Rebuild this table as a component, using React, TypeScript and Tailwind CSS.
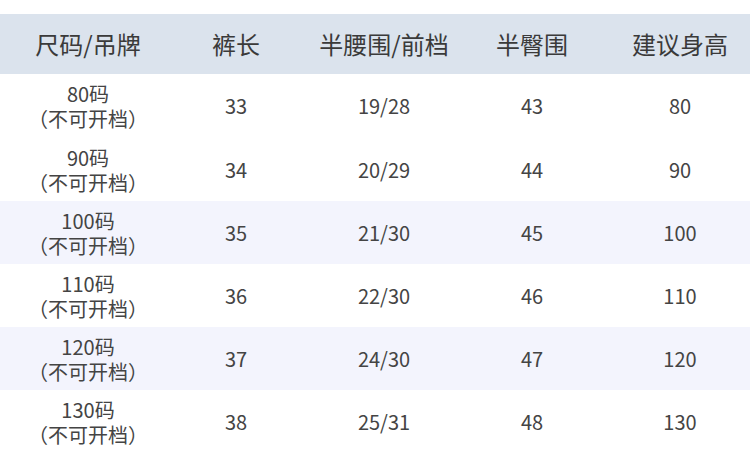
const header = ["尺码/吊牌", "裤长", "半腰围/前档", "半臀围", "建议身高"];

const rows = [
  { size: "80码", len: "33", waist: "19/28", hip: "43", height: "80" },
  { size: "90码", len: "34", waist: "20/29", hip: "44", height: "90" },
  { size: "100码", len: "35", waist: "21/30", hip: "45", height: "100" },
  { size: "110码", len: "36", waist: "22/30", hip: "46", height: "110" },
  { size: "120码", len: "37", waist: "24/30", hip: "47", height: "120" },
  { size: "130码", len: "38", waist: "25/31", hip: "48", height: "130" },
];

const font = { fontFamily: '"Noto Sans CJK SC", "Noto Sans", sans-serif' };

export default function App() {
  return (
    <div className="w-[750px] h-[452px] bg-white overflow-hidden pt-[14px]" style={font}>
      {/* header band */}
      <div className="flex h-[60px] items-center bg-[#dbe3ed] pl-[14px] text-[24px] leading-none text-[#3a3a3a]">
        {header.map((h) => (
          <div key={h} className="w-[148px] shrink-0 text-center">{h}</div>
        ))}
      </div>

      {rows.map((r, i) => (
        <div
          key={r.size}
          className={`flex items-center pl-[14px] text-[20px] leading-none text-[#444] ${i === 0 ? "h-[64px]" : "h-[63px]"} ${
            i === 2 || i === 4 ? "bg-[#f3f4fd]" : "bg-white"
          }`}
        >
          <div className="w-[148px] shrink-0 text-center text-[20px] leading-[25px]">
            <div>{r.size}</div>
            <div>（不可开档）</div>
          </div>
          <div className="w-[148px] shrink-0 text-center">{r.len}</div>
          <div className="w-[148px] shrink-0 text-center">{r.waist}</div>
          <div className="w-[148px] shrink-0 text-center">{r.hip}</div>
          <div className="w-[148px] shrink-0 text-center">{r.height}</div>
        </div>
      ))}
    </div>
  );
}
